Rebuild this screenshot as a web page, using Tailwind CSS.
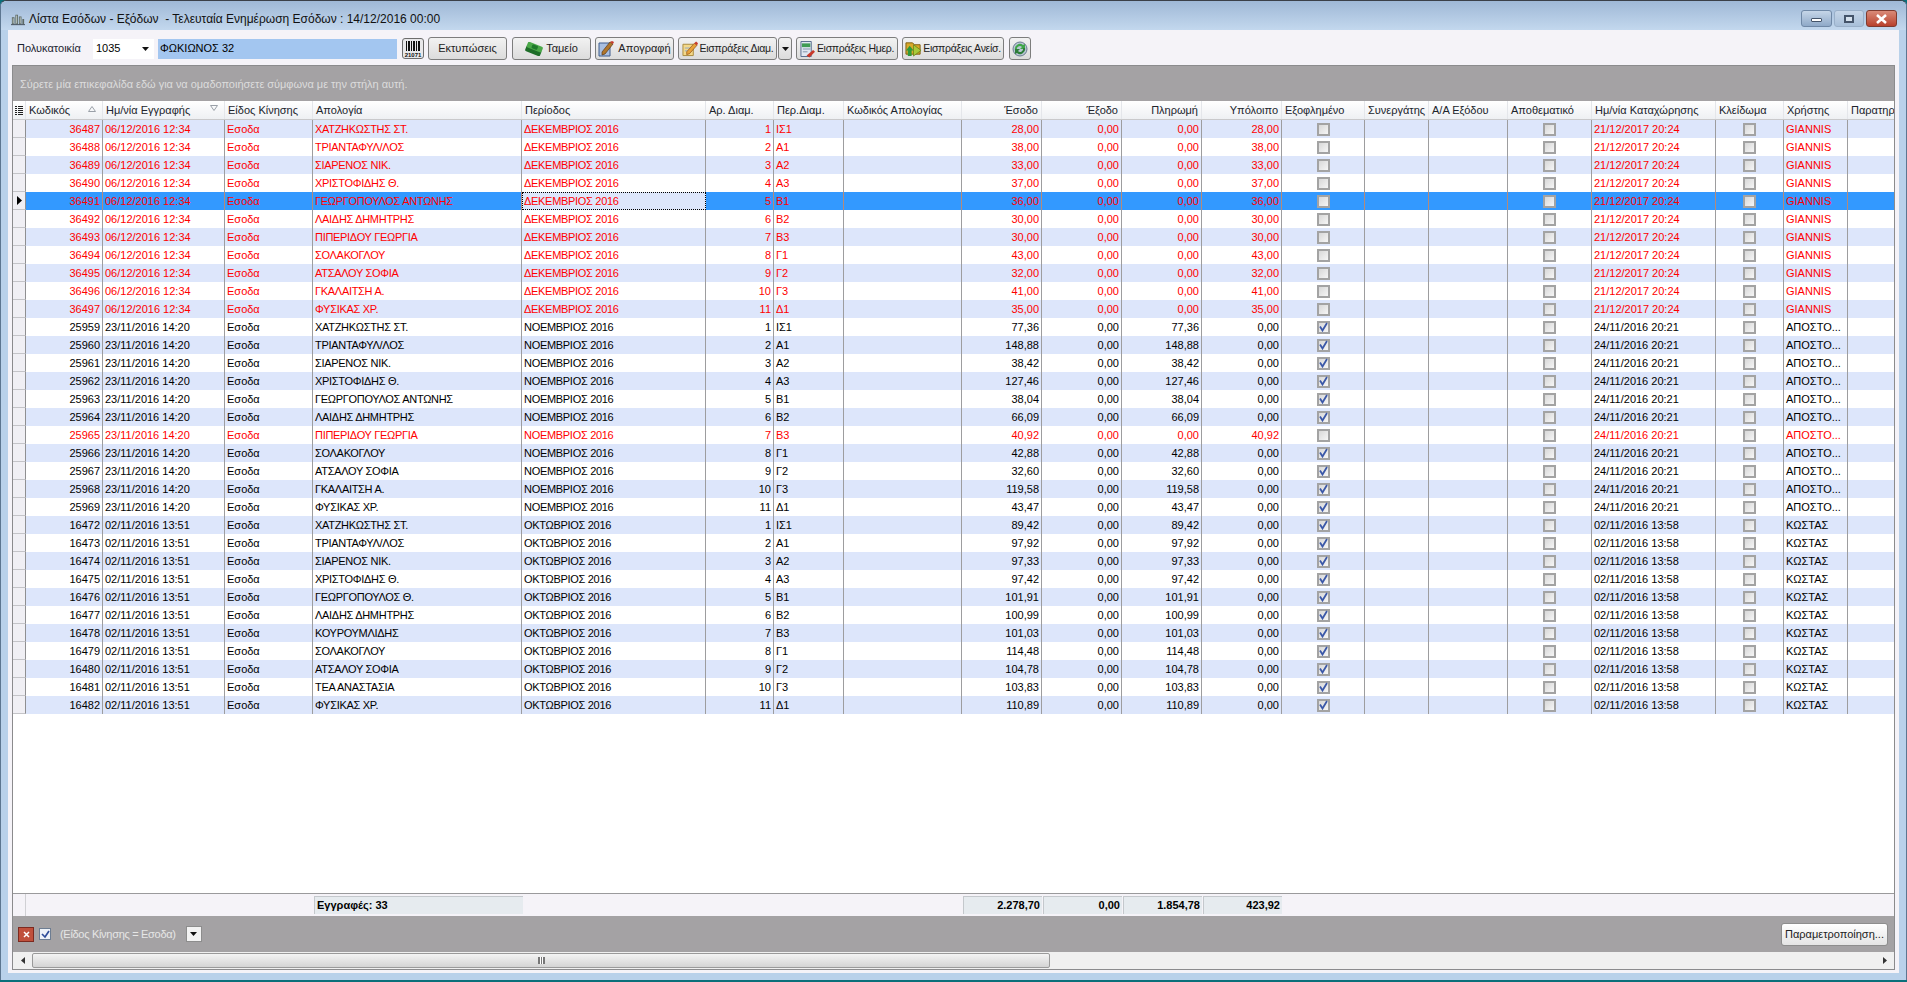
<!DOCTYPE html>
<html lang="el">
<head>
<meta charset="utf-8">
<script src="https://cdn.jsdelivr.net/npm/@tailwindcss/browser@4"></script>
</head>
<body class="m-0 h-[982px] w-[1907px] overflow-hidden bg-[#0a6f7a] font-['Liberation_Sans',sans-serif] text-[11px] text-black">
<div class="flex h-[980px] w-[1907px] flex-col rounded-t-md border-x border-t border-x-[#5d7690] border-t-[#3b4048] bg-[#b9d1ea]">
  <!-- title bar -->
  <div class="relative flex h-[29px] shrink-0 items-center rounded-t-md bg-gradient-to-b from-[#9fb8d6] to-[#c3d8ee] pl-[10px] pt-[6px]">
    <svg class="mr-[4px] h-[14px] w-[14px]" viewBox="0 0 16 16"><path d="M1 14V6h3v8zM5 14V3h3v11zM9 14V5h3v9zM13 14V8h2v6z" fill="#5d6a66"/><path d="M2 7h1v6H2zM6 4h1v9H6zM10 6h1v7h-1z" fill="#c9d3cc"/><path d="M0 14h16v1H0z" fill="#39424c"/></svg>
    <span class="text-[12px] leading-none text-[#111]">Λίστα Εσόδων - Εξόδων&nbsp; - Τελευταία Ενημέρωση Εσόδων : 14/12/2016 00:00</span>
    <div class="absolute right-[9px] top-[9px] flex h-[17px] items-start gap-[2px]">
      <div class="flex h-[17px] w-[31px] items-center justify-center rounded-[3px] border border-[#6f88a6] bg-gradient-to-b from-[#c6d6e8] to-[#8fa9c8]"><div class="mt-[3px] h-[4px] w-[11px] rounded-[1px] border border-[#44546a] bg-white"></div></div>
      <div class="flex h-[17px] w-[30px] items-center justify-center rounded-[3px] border border-[#9ab0c9] bg-gradient-to-b from-[#c6d6e8] to-[#a8bfd9]"><div class="h-[8px] w-[10px] border-2 border-[#44546a] bg-[#d6e2ee]"></div></div>
      <div class="flex h-[17px] w-[31px] items-center justify-center rounded-[3px] border border-[#7f3a2e] bg-gradient-to-b from-[#d98a78] to-[#b8402c]"><svg class="h-[10px] w-[13px]" viewBox="0 0 13 10"><path d="M2 1l9 8M11 1L2 9" stroke="#fff" stroke-width="2.6"/></svg></div>
    </div>
  </div>
  <!-- client -->
  <div class="mx-[7px] mb-[7px] flex min-h-0 flex-1 flex-col bg-[#f5f3f8] pb-[3px] pl-[4px] pr-[4px]">
    <!-- toolbar -->
    <div class="flex h-[35px] shrink-0 items-center pl-[5px] pt-[2px]">
      <span class="w-[76px] text-[#1c2430]">Πολυκατοικία</span>
      <div class="flex h-[20px] w-[61px] items-center bg-white pl-[3px] pr-[3px]"><span>1035</span><svg class="ml-auto mr-[2px] h-[4px] w-[7px]" viewBox="0 0 7 4"><path d="M0 0h7L3.500 4z" fill="#111"/></svg></div>
      <div class="ml-[4px] flex h-[20px] w-[239px] items-center bg-[#a3c6f0] pl-[2px]">ΦΩΚΙΩΝΟΣ 32</div>
      <div class="ml-[5px] flex h-[21px] w-[22px] flex-col items-center justify-center rounded-[3px] border border-[#6d6d6d] bg-[#e8e8ea]">
        <svg class="h-[18px] w-[18px]" viewBox="0 0 18 18"><path d="M2 1h1v10H2zM4 1h2v10H4zM7 1h1v10H7zM9 1h2v10H9zM12 1h1v10h-1zM14 1h2v10h-2z" fill="#111"/><text x="9" y="17" text-anchor="middle" font-size="6" font-weight="700" font-family="Liberation Sans" fill="#111">21071</text></svg>
      </div>
      <button class="ml-[4px] flex h-[23px] w-[79px] items-center justify-center whitespace-nowrap rounded-[3px] border border-[#7d7d7d] bg-gradient-to-b from-[#f2f2f2] to-[#dcdcdc] text-[#222]">Εκτυπώσεις</button>
      <button class="ml-[5px] flex h-[23px] w-[79px] items-center justify-center gap-[3px] whitespace-nowrap rounded-[3px] border border-[#7d7d7d] bg-gradient-to-b from-[#f2f2f2] to-[#dcdcdc] text-[#222]"><svg class="h-[14px] w-[18px]" viewBox="0 0 18 14"><g transform="rotate(22 9 7)"><rect x="1" y="6" width="16" height="6" rx="1.500" fill="#1d6d28"/><rect x="1" y="2" width="16" height="6" rx="1.500" fill="#4aa848"/><rect x="6" y="3" width="6" height="4" rx="1" fill="#1e7a2a"/></g></svg>Ταμείο</button>
      <button class="ml-[4px] flex h-[23px] w-[79px] items-center justify-center gap-[3px] whitespace-nowrap rounded-[3px] border border-[#7d7d7d] bg-gradient-to-b from-[#f2f2f2] to-[#dcdcdc] text-[#222]"><svg class="h-[17px] w-[17px]" viewBox="0 0 17 17"><path d="M1 3h11v13H1z" fill="#a9bfe0" stroke="#3e5c8e"/><path d="M4 12l8-10 3 2-8 10-3 1z" fill="#b0762a" stroke="#5a3a1a" stroke-width=".7"/><path d="M12 2l3 2 1-2-2-1z" fill="#c8392b"/></svg>Απογραφή</button>
      <button class="ml-[4px] flex h-[23px] w-[99px] items-center justify-center gap-[2px] whitespace-nowrap rounded-[3px] border border-[#7d7d7d] bg-gradient-to-b from-[#f2f2f2] to-[#dcdcdc] text-[10.500px] tracking-[-0.3px] text-[#222]"><svg class="h-[17px] w-[16px] shrink-0" viewBox="0 0 17 17"><path d="M1 4h11v12H1z" fill="#f4d98a" stroke="#a8893c"/><path d="M3 8h7M3 11h7" stroke="#8fa7c8"/><path d="M5 12l8-9 3 2-8 9-3 1z" fill="#e8a23a" stroke="#8a4b1a" stroke-width=".7"/><path d="M13 3l3 2 1-2-2-2z" fill="#c8392b"/></svg>Εισπράξεις Διαμ.</button>
      <button class="ml-[1px] flex h-[23px] w-[14px] items-center justify-center rounded-[3px] border border-[#7d7d7d] bg-gradient-to-b from-[#f2f2f2] to-[#dcdcdc]"><svg class="h-[4px] w-[7px]" viewBox="0 0 7 4"><path d="M0 0h7L3.500 4z" fill="#111"/></svg></button>
      <button class="ml-[4px] flex h-[23px] w-[102px] items-center justify-center gap-[2px] whitespace-nowrap rounded-[3px] border border-[#7d7d7d] bg-gradient-to-b from-[#f2f2f2] to-[#dcdcdc] text-[10.500px] tracking-[-0.3px] text-[#222]"><svg class="h-[18px] w-[15px] shrink-0" viewBox="0 0 16 18"><path d="M1 1h11v16H1z" fill="#dfe7f2" stroke="#52688a"/><path d="M2 3h9v4H2z" fill="#3f9c55"/><path d="M3 9h8M3 12h5" stroke="#7d8fa8"/><path d="M7 16l7-6 2 2-6 6z" fill="#c8392b"/></svg>Εισπράξεις Ημερ.</button>
      <button class="ml-[4px] flex h-[23px] w-[102px] items-center justify-center gap-[1px] whitespace-nowrap rounded-[3px] border border-[#7d7d7d] bg-gradient-to-b from-[#f2f2f2] to-[#dcdcdc] text-[10.500px] tracking-[-0.3px] text-[#222]"><svg class="h-[17px] w-[17px] shrink-0" viewBox="0 0 18 18"><path d="M1 3h7l2 2h6v10H1z" fill="#d9a92b" stroke="#7d5d10"/><path d="M9 5l8 6-8 6z" fill="#a8c93a" stroke="#5d7a10" stroke-width=".7"/><path d="M3 17v-6H1l4-5 4 5H7v6z" fill="#2e9a3a"/></svg>Εισπράξεις Ανείσ.</button>
      <button class="ml-[5px] flex h-[23px] w-[22px] items-center justify-center rounded-[3px] border border-[#7d7d7d] bg-gradient-to-b from-[#f2f2f2] to-[#dcdcdc]"><svg class="h-[16px] w-[16px]" viewBox="0 0 16 16"><circle cx="8" cy="8" r="7" fill="#b9c6d4" stroke="#6b7d90"/><path d="M3 9a5 5 0 0 1 8-5l2-1v5H8l2-2a3 3 0 0 0-5 3z" fill="#3fa648"/><path d="M13 7a5 5 0 0 1-8 5l-2 1V8h5l-2 2a3 3 0 0 0 5-3z" fill="#2d7d38"/></svg></button>
    </div>
    <!-- grid panel -->
    <div class="flex min-h-0 flex-1 flex-col border border-[#8b8b8d] bg-white">
      <div class="flex h-[35px] shrink-0 items-center bg-[#a4a2a4] pl-[7px] pt-[2px] tracking-[-0.03px] text-[#dcdcdc]">Σύρετε μία επικεφαλίδα εδώ για να ομαδοποιήσετε σύμφωνα με την στήλη αυτή.</div>
      <div id="head" class="grid h-[19px] shrink-0 grid-cols-[13px_77px_122px_88px_209px_184px_68px_70px_118px_80px_80px_80px_80px_83px_64px_79px_84px_124px_68px_64px_48px] overflow-hidden border-b border-[#c9c9cb] bg-gradient-to-b from-white to-[#eef0f3] text-[#20242c]"></div>
      <div id="rows" class="shrink-0"></div>
      <div class="min-h-0 flex-1 bg-white"></div>
      <!-- footer -->
      <div class="grid h-[23px] shrink-0 grid-cols-[13px_288px_209px_184px_68px_70px_118px_80px_80px_80px_80px] items-center border-t border-[#9a9a9c] bg-[#f5f3f8] font-bold">
        <div class="h-full border-r border-[#d0d0d4]"></div>
        <div></div>
        <div class="flex h-[18px] items-center border-l border-t border-[#c4c8cc] bg-[#e6ebef] pl-[2px]">Εγγραφές: 33</div>
        <div></div><div></div><div></div><div></div>
        <div class="mr-[1px] flex h-[18px] items-center justify-end border-l border-t border-[#c4c8cc] bg-[#e6ebef] pr-[2px]">2.278,70</div>
        <div class="mr-[1px] flex h-[18px] items-center justify-end border-l border-t border-[#c4c8cc] bg-[#e6ebef] pr-[2px]">0,00</div>
        <div class="mr-[1px] flex h-[18px] items-center justify-end border-l border-t border-[#c4c8cc] bg-[#e6ebef] pr-[2px]">1.854,78</div>
        <div class="mr-[1px] flex h-[18px] items-center justify-end border-l border-t border-[#c4c8cc] bg-[#e6ebef] pr-[2px]">423,92</div>
      </div>
      <!-- filter bar -->
      <div class="flex h-[36px] shrink-0 items-center bg-[#a4a2a4] pl-[5px] pr-[6px]">
        <div class="flex h-[15px] w-[16px] items-center justify-center border border-[#7d2a20] bg-[#c0503c]"><svg class="h-[7px] w-[7px]" viewBox="0 0 7 7"><path d="M1 1l5 5M6 1L1 6" stroke="#fff" stroke-width="1.500"/></svg></div>
        <div class="ml-[5px] flex h-[12px] w-[12px] items-center justify-center border border-[#6d7d92] bg-[#eef2f8]"><svg class="h-[9px] w-[9px]" viewBox="0 0 9 9"><path d="M1 4l3 3 4-6" stroke="#2f4d9a" fill="none" stroke-width="1.700"/></svg></div>
        <span class="ml-[9px] tracking-[-0.3px] text-[#e6e6e6]">(Είδος Κίνησης = Εσοδα)</span>
        <div class="ml-[10px] flex h-[16px] w-[16px] items-center justify-center border border-[#8d8d8d] bg-[#f3f3f3]"><svg class="h-[4px] w-[7px]" viewBox="0 0 7 4"><path d="M0 0h7L3.500 4z" fill="#111"/></svg></div>
        <button class="ml-auto h-[23px] w-[107px] whitespace-nowrap rounded-[3px] border border-[#8d8d8d] bg-gradient-to-b from-white to-[#e4e4e4] text-[#222]">Παραμετροποίηση...</button>
      </div>
      <!-- scrollbar -->
      <div class="flex h-[17px] shrink-0 items-center bg-[#f0f0f0]">
        <div class="flex w-[19px] justify-center"><svg class="h-[7px] w-[4px]" viewBox="0 0 4 7"><path d="M4 0v7L0 3.500z" fill="#333"/></svg></div>
        <div class="flex h-[15px] w-[1018px] items-center justify-center rounded-[2px] border border-[#9a9a9a] bg-gradient-to-b from-[#f4f4f4] to-[#d4d4d4]"><span class="h-[7px] w-[7px] border-x-2 border-[#777] bg-[linear-gradient(90deg,#fff_35%,#777_35%,#777_65%,#fff_65%)]"></span></div>
        <div class="ml-auto flex w-[19px] justify-center"><svg class="h-[7px] w-[4px]" viewBox="0 0 4 7"><path d="M0 0v7l4-3.500z" fill="#333"/></svg></div>
      </div>
    </div>
  </div>
</div>
<script>
const cols=[
 ["Κωδικός",'l'],["Ημ/νία Εγγραφής",'l'],["Είδος Κίνησης",'l'],["Απολογία",'l'],["Περίοδος",'l'],["Αρ. Διαμ.",'l'],["Περ.Διαμ.",'l'],["Κωδικός Απολογίας",'l'],
 ["Έσοδο",'r'],["Έξοδο",'r'],["Πληρωμή",'r'],["Υπόλοιπο",'r'],["Εξοφλημένο",'l'],["Συνεργάτης",'l'],["Α/Α Εξόδου",'l'],["Αποθεματικό",'l'],["Ημ/νία Καταχώρησης",'l'],["Κλείδωμα",'l'],["Χρήστης",'l'],["Παρατηρήσεις",'l']];
const apts=["ΙΣ1","Α1","Α2","Α3","Β1","Β2","Β3","Γ1","Γ2","Γ3","Δ1"];
const n1=["ΧΑΤΖΗΚΩΣΤΗΣ ΣΤ.","ΤΡΙΑΝΤΑΦΥΛ/ΛΟΣ","ΣΙΑΡΕΝΟΣ ΝΙΚ.","ΧΡΙΣΤΟΦΙΔΗΣ Θ.","ΓΕΩΡΓΟΠΟΥΛΟΣ ΑΝΤΩΝΗΣ","ΛΑΙΔΗΣ ΔΗΜΗΤΡΗΣ","ΠΙΠΕΡΙΔΟΥ ΓΕΩΡΓΙΑ","ΣΟΛΑΚΟΓΛΟΥ","ΑΤΣΑΛΟΥ ΣΟΦΙΑ","ΓΚΑΛΑΙΤΣΗ Α.","ΦΥΣΙΚΑΣ ΧΡ."];
const n3=["ΧΑΤΖΗΚΩΣΤΗΣ ΣΤ.","ΤΡΙΑΝΤΑΦΥΛ/ΛΟΣ","ΣΙΑΡΕΝΟΣ ΝΙΚ.","ΧΡΙΣΤΟΦΙΔΗΣ Θ.","ΓΕΩΡΓΟΠΟΥΛΟΣ Θ.","ΛΑΙΔΗΣ ΔΗΜΗΤΡΗΣ","ΚΟΥΡΟΥΜΛΙΔΗΣ","ΣΟΛΑΚΟΓΛΟΥ","ΑΤΣΑΛΟΥ ΣΟΦΙΑ","ΤΕΑ ΑΝΑΣΤΑΣΙΑ","ΦΥΣΙΚΑΣ ΧΡ."];
const a1=["28,00","38,00","33,00","37,00","36,00","30,00","30,00","43,00","32,00","41,00","35,00"];
const a2=["77,36","148,88","38,42","127,46","38,04","66,09","40,92","42,88","32,60","119,58","43,47"];
const a3=["89,42","97,92","97,33","97,42","101,91","100,99","101,03","114,48","104,78","103,83","110,89"];
const rows=[];
for(let i=0;i<11;i++)rows.push({id:36487+i,d:"06/12/2016 12:34",n:n1[i],p:"ΔΕΚΕΜΒΡΙΟΣ 2016",i,a:a1[i],pay:"0,00",b:a1[i],ok:false,k:"21/12/2017 20:24",u:"GIANNIS",red:true});
for(let i=0;i<11;i++){const un=i===6;rows.push({id:25959+i,d:"23/11/2016 14:20",n:n1[i],p:"ΝΟΕΜΒΡΙΟΣ 2016",i,a:a2[i],pay:un?"0,00":a2[i],b:un?a2[i]:"0,00",ok:!un,k:"24/11/2016 20:21",u:"ΑΠΟΣΤΟ...",red:un});}
for(let i=0;i<11;i++)rows.push({id:16472+i,d:"02/11/2016 13:51",n:n3[i],p:"ΟΚΤΩΒΡΙΟΣ 2016",i,a:a3[i],pay:a3[i],b:"0,00",ok:true,k:"02/11/2016 13:58",u:"ΚΩΣΤΑΣ"});
const al={r:"justify-end text-right",l:"justify-start",c:"justify-center",n:"justify-start tracking-[-0.3px]"};
let h='<div class="flex items-center justify-center border-r border-[#e4e6ea]"><svg class="h-[9px] w-[8px]" viewBox="0 0 8 9"><path d="M0 0h2v1H0zM3 0h5v1H3zM0 2h2v1H0zM3 2h5v1H3zM0 4h2v1H0zM3 4h5v1H3zM0 6h2v1H0zM3 6h5v1H3zM0 8h2v1H0zM3 8h5v1H3z" fill="#222"/></svg></div>';
cols.forEach((c,i)=>{
  let inner=`<span class="whitespace-nowrap">${c[0]}</span>`;
  let cls='relative flex items-center overflow-hidden border-r border-[#e4e6ea] px-[3px] '+(c[1]==='r'?'justify-end':'justify-start');
  if(i===0)inner+='<svg class="absolute right-[6px] top-[5px] h-[6px] w-[8px]" viewBox="0 0 8 6"><path d="M4 .5L7.500 5.500H.5z" fill="none" stroke="#9aa0a8"/></svg>';
  if(i===1)inner+='<svg class="absolute right-[6px] top-[4px] h-[6px] w-[8px]" viewBox="0 0 8 6"><path d="M4 5.500L7.500 .5H.5z" fill="none" stroke="#9aa0a8"/></svg>';
  h+=`<div class="${cls}">${inner}</div>`;
});
document.getElementById('head').innerHTML=h;
const cell=(t,a,b)=>`<div class="flex h-full items-center overflow-hidden whitespace-nowrap px-[2px] ${a} ${b}">${t}</div>`;
const chk=(on)=>`<div class="flex h-[13px] w-[13px] items-center justify-center border-2 border-[#a3a3a3] bg-gradient-to-br from-[#d8d8d8] to-[#f6f6f6]">${on?'<svg class="h-[10px] w-[10px]" viewBox="0 0 9 9"><path d="M1 4l2.500 4L8 .5" stroke="#3b58a8" fill="none" stroke-width="1.800"/></svg>':''}</div>`;
let out='';
rows.forEach((r,ix)=>{
  const sel=ix===4;
  const bg=sel?'bg-[#3399ff]':(ix%2===0?'bg-[#dde6fb]':'bg-white');
  const tx=r.red?'text-[#ff0000]':'text-black';
  const bd=sel?'border-r border-[#b58a7a]':'border-r border-[#9d9d9f]';
  const c=(t,a)=>cell(t,al[a],bd);
  const vals=[c(r.id,'r'),c(r.d,'l'),c('Εσοδα','l'),c(r.n,'n'),
   sel?`<div class="flex h-full items-center overflow-hidden whitespace-nowrap border border-dotted border-black bg-[#dde6fb] px-[1px] tracking-[-0.3px]">${r.p}</div>`:c(r.p,'n'),
   c(r.i+1,'r'),c(apts[r.i],'l'),c('','l'),c(r.a,'r'),c('0,00','r'),c(r.pay,'r'),c(r.b,'r'),
   c(chk(r.ok),'c'),c('','l'),c('','l'),c(chk(false),'c'),c(r.k,'l'),c(chk(false),'c'),c(r.u,'l'),`<div class="h-full"></div>`].join('');
  const ind=`<div class="flex h-full items-center justify-center border-r border-b border-r-[#8f8f91] border-b-[#c4c4c8] bg-[#f0eff4]">${sel?'<svg class="h-[9px] w-[5px]" viewBox="0 0 5 9"><path d="M0 0l5 4.500L0 9z" fill="#000"/></svg>':''}</div>`;
  out+=`<div class="grid h-[18px] grid-cols-[13px_77px_122px_88px_209px_184px_68px_70px_118px_80px_80px_80px_80px_83px_64px_79px_84px_124px_68px_64px_48px] ${bg} ${tx}">${ind}${vals}</div>`;
});
document.getElementById('rows').innerHTML=out;
</script>
</body>
</html>
